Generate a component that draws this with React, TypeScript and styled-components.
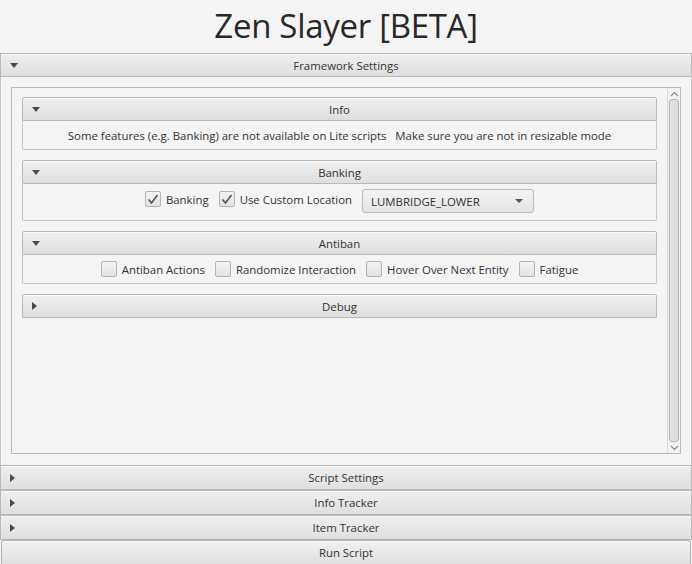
import React from 'react'
import styled, { createGlobalStyle } from 'styled-components'

const GlobalStyle = createGlobalStyle`
  html, body {
    margin: 0;
    padding: 0;
    background: #f4f4f4;
  }
  *, *::before, *::after {
    box-sizing: border-box;
  }
  body {
    font-family: "Open Sans", "Noto Sans", sans-serif;
    font-size: 11.4px;
    color: #333;
  }
`

const Page = styled.div`
  width: 692px;
  height: 564px;
  display: flex;
  flex-direction: column;
  overflow: hidden;
  background: #f4f4f4;
`

const Title = styled.h1`
  margin: 0;
  height: 53px;
  flex-shrink: 0;
  display: flex;
  align-items: center;
  justify-content: center;
  padding-bottom: 2px;
  font-family: "Open Sans", sans-serif;
  font-weight: 400;
  font-size: 33px;
  color: #282828;
  letter-spacing: -0.3px;
`

const Header = styled.div<{ $inner?: boolean; $h?: number }>`
  position: relative;
  height: ${p => p.$h ?? 24}px;
  flex-shrink: 0;
  display: flex;
  align-items: center;
  justify-content: center;
  border: 1px solid #b9b9b9;
  border-radius: ${p => (p.$inner ? '2px 2px 0 0' : '0')};
  background: linear-gradient(#efefef, #dfdfdf);
  color: #333;
  box-shadow: inset 0 1px 0 #fafafa;
`

const Arrow = styled.span<{ $open: boolean }>`
  position: absolute;
  left: 9px;
  top: 50%;
  width: 0;
  height: 0;
  ${p =>
    p.$open
      ? `
    margin-top: -2px;
    border-left: 4px solid transparent;
    border-right: 4px solid transparent;
    border-top: 5px solid #4a4a4a;
  `
      : `
    margin-top: -4px;
    border-top: 4px solid transparent;
    border-bottom: 4px solid transparent;
    border-left: 5px solid #4a4a4a;
  `}
`

const Outer = styled.div`
  flex: 1;
  display: flex;
  flex-direction: column;
  min-height: 0;
`

const OuterBody = styled.div`
  flex: 1;
  padding: 10px 10px 11px 10px;
  border-left: 1px solid #c4c4c4;
  border-right: 1px solid #c4c4c4;
  display: flex;
  min-height: 0;
`

const ScrollPane = styled.div`
  flex: 1;
  display: flex;
  border: 1px solid #b9b9b9;
  background: #f4f4f4;
`

const Viewport = styled.div`
  flex: 1;
  padding: 9px 10px 10px 10px;
  display: flex;
  flex-direction: column;
  gap: 10px;
`

const ScrollBar = styled.div`
  width: 13px;
  display: flex;
  flex-direction: column;
  border-left: 1px solid #dadada;
  background: #f2f2f2;
`

const ScrollButton = styled.div`
  height: 11px;
  display: flex;
  align-items: center;
  justify-content: center;
`

const Thumb = styled.div`
  flex: 1;
  margin: 0 1px;
  border: 1px solid #b5b5b5;
  border-radius: 3px;
  background: linear-gradient(90deg, #e4e4e4, #dcdcdc);
`

const Pane = styled.div`
  display: flex;
  flex-direction: column;
`

const PaneBody = styled.div<{ $h: number; $top?: boolean }>`
  height: ${p => p.$h}px;
  display: flex;
  align-items: ${p => (p.$top ? 'flex-start' : 'center')};
  padding-top: ${p => (p.$top ? '5px' : '0')};
  justify-content: center;
  gap: 10px;
  border: 1px solid #c6c6c6;
  border-top: none;
  border-radius: 0 0 2px 2px;
  background: #f4f4f4;
`

const InfoText = styled.span`
  white-space: pre;
`

const Check = styled.label<{ $shift?: number }>`
  display: flex;
  align-items: center;
  gap: 5px;
  white-space: nowrap;
  margin-top: ${p => p.$shift ?? 0}px;
`

const Box = styled.span`
  width: 16px;
  height: 16px;
  border: 1px solid #b4b4b4;
  border-radius: 2px;
  background: linear-gradient(#f3f3f3, #e2e2e2);
  display: flex;
  align-items: center;
  justify-content: center;
`

const Combo = styled.div`
  width: 172px;
  height: 24px;
  border: 1px solid #bdbdbd;
  border-radius: 3px;
  background: linear-gradient(#f3f3f3, #e4e4e4);
  display: flex;
  align-items: center;
  justify-content: space-between;
  padding: 0 10px 0 8px;
`

const ComboArrow = styled.span`
  width: 0;
  height: 0;
  border-left: 4px solid transparent;
  border-right: 4px solid transparent;
  border-top: 4px solid #555;
`

const Collapsed = styled.div`
  display: flex;
  flex-direction: column;
  flex-shrink: 0;
`

const RunButton = styled.div`
  height: 24px;
  flex-shrink: 0;
  margin: 0 1px;
  border: 1px solid #b4b4b4;
  border-bottom: none;
  border-radius: 3px 3px 0 0;
  background: linear-gradient(#f1f1f1, #e0e0e0);
  box-shadow: inset 0 1px 0 #fbfbfb;
  display: flex;
  align-items: center;
  justify-content: center;
`

const CheckMark = () => (
  <svg width="12" height="11" viewBox="0 0 12 11">
    <path d="M1.5 5.5 L4.5 9 L10.5 1" fill="none" stroke="#555" strokeWidth="1.6" />
  </svg>
)

const Chevron = ({ up }: { up?: boolean }) => (
  <svg width="9" height="6" viewBox="0 0 9 6">
    <path d={up ? 'M1 5 L4.5 1.5 L8 5' : 'M1 1 L4.5 4.5 L8 1'} fill="none" stroke="#8a8a8a" strokeWidth="1.2" />
  </svg>
)

const CheckItem = ({ label, checked, shift }: { label: string; checked?: boolean; shift?: number }) => (
  <Check $shift={shift}>
    <Box>{checked && <CheckMark />}</Box>
    {label}
  </Check>
)

const InnerHeader = ({ title, open }: { title: string; open: boolean }) => (
  <Header $inner>
    <Arrow $open={open} />
    {title}
  </Header>
)

const App = () => {
  return (
    <Page>
      <GlobalStyle />
      <Title>Zen Slayer [BETA]</Title>
      <Outer>
        <Header>
          <Arrow $open />
          Framework Settings
        </Header>
        <OuterBody>
          <ScrollPane>
            <Viewport>
              <Pane>
                <InnerHeader title="Info" open />
                <PaneBody $h={29}>
                  <InfoText>
                    Some features (e.g. Banking) are not available on Lite scripts   Make sure you are not in resizable mode
                  </InfoText>
                </PaneBody>
              </Pane>
              <Pane>
                <InnerHeader title="Banking" open />
                <PaneBody $h={37} $top>
                  <CheckItem label="Banking" checked shift={2} />
                  <CheckItem label="Use Custom Location" checked shift={2} />
                  <Combo>
                    LUMBRIDGE_LOWER
                    <ComboArrow />
                  </Combo>
                </PaneBody>
              </Pane>
              <Pane>
                <InnerHeader title="Antiban" open />
                <PaneBody $h={29}>
                  <CheckItem label="Antiban Actions" />
                  <CheckItem label="Randomize Interaction" />
                  <CheckItem label="Hover Over Next Entity" />
                  <CheckItem label="Fatigue" />
                </PaneBody>
              </Pane>
              <Pane>
                <InnerHeader title="Debug" open={false} />
              </Pane>
            </Viewport>
            <ScrollBar>
              <ScrollButton>
                <Chevron up />
              </ScrollButton>
              <Thumb />
              <ScrollButton>
                <Chevron />
              </ScrollButton>
            </ScrollBar>
          </ScrollPane>
        </OuterBody>
      </Outer>
      <Collapsed>
        <Header $h={25}>
          <Arrow $open={false} />
          Script Settings
        </Header>
        <Header $h={25}>
          <Arrow $open={false} />
          Info Tracker
        </Header>
        <Header $h={25}>
          <Arrow $open={false} />
          Item Tracker
        </Header>
      </Collapsed>
      <RunButton>Run Script</RunButton>
    </Page>
  )
}

export default App
